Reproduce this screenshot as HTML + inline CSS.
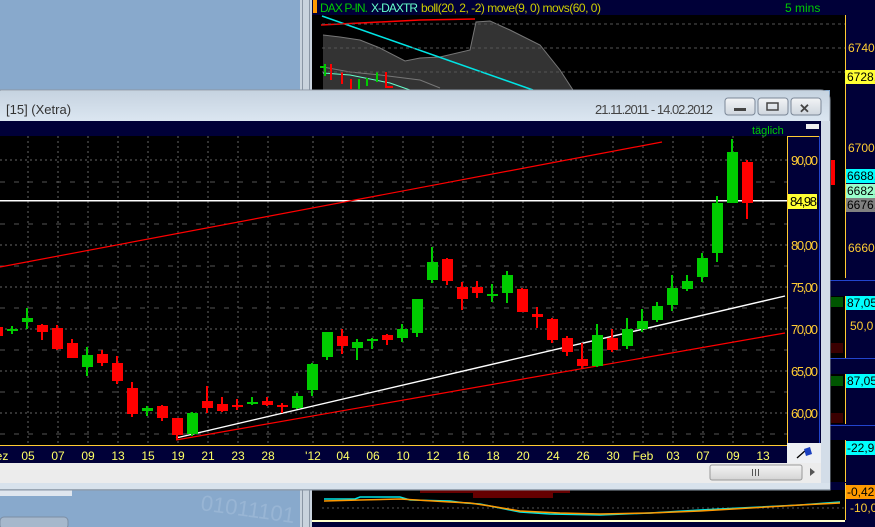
<!DOCTYPE html>
<html><head><meta charset="utf-8"><style>
html,body{margin:0;padding:0;width:875px;height:527px;overflow:hidden;background:#88a9cc}
svg{display:block}
text{font-family:"Liberation Sans",sans-serif}
</style></head><body>
<svg width="875" height="527" viewBox="0 0 875 527" xmlns="http://www.w3.org/2000/svg">
<defs>
<linearGradient id="tb" x1="0" y1="0" x2="0" y2="1"><stop offset="0" stop-color="#c6d3e0"/><stop offset="1" stop-color="#dbe6f1"/></linearGradient>
<linearGradient id="btn" x1="0" y1="0" x2="0" y2="1"><stop offset="0" stop-color="#f2f4f6"/><stop offset="1" stop-color="#cfd6de"/></linearGradient>
<linearGradient id="thumb" x1="0" y1="0" x2="0" y2="1"><stop offset="0" stop-color="#f4f4f4"/><stop offset="1" stop-color="#d4d4d4"/></linearGradient>
</defs>
<rect x="0" y="0" width="875" height="527" fill="#88a9cc"/>
<rect x="300" y="0" width="12" height="527" fill="#c9d3dd"/>
<rect x="302" y="0" width="1" height="527" fill="#8a96a4"/>
<rect x="309" y="0" width="1" height="527" fill="#8a96a4"/>
<!-- top bg chart -->
<rect x="312" y="0" width="563" height="90" fill="#000"/>
<rect x="312" y="0" width="563" height="15" fill="#000038"/>
<rect x="313" y="0" width="4" height="13" fill="#ff9900"/>
<text x="320" y="12" font-size="12" fill="#00cc00" textLength="48">DAX P-IN.</text>
<text x="371" y="12" font-size="12" fill="#66ffcc" textLength="47">X-DAXTR</text>
<text x="421" y="12" font-size="12" fill="#cccc00" textLength="180">boll(20, 2, -2) move(9, 0) movs(60, 0)</text>
<text x="785" y="12" font-size="12" fill="#00cc00">5 mins</text>
<polygon points="323,35 340,37 360,40 380,48 405,61 420,58 440,57 470,50 476,22 490,21 510,30 540,45 560,70 573,90 323,90" fill="#333"/>
<polyline points="323,35 340,37 360,40 380,48 405,61 420,58 440,57 470,50 476,22 490,21 510,30 540,45 560,70 573,90" fill="none" stroke="#777" stroke-width="1"/>
<polyline points="322,16 533,90" stroke="#00e5e5" stroke-width="1.5" fill="none"/>
<polyline points="321,25 360,23 420,20 475,19" stroke="#ff0000" stroke-width="1.5" fill="none"/>
<polyline points="323,67 350,72 380,75 420,80 440,88" stroke="#777" fill="none"/>
<polyline points="323,73 350,75 390,83 410,90" stroke="#66ffcc" fill="none"/>
<g fill="#00cc00"><rect x="324" y="64" width="2" height="12"/><rect x="320" y="66" width="6" height="2"/><rect x="358" y="79" width="2" height="10"/><rect x="366" y="78" width="2" height="8"/><rect x="376" y="72" width="2" height="10"/></g>
<g fill="#ff0000"><rect x="330" y="64" width="2" height="16"/><rect x="341" y="72" width="2" height="12"/><rect x="350" y="79" width="2" height="10"/><rect x="385" y="72" width="2" height="16"/><rect x="385" y="86" width="8" height="2"/></g>
<g stroke="#555" stroke-dasharray="3,3"><line x1="322" y1="48" x2="845" y2="48"/><line x1="322" y1="24" x2="845" y2="24"/><line x1="322" y1="72" x2="845" y2="72"/></g>
<rect x="845" y="15" width="30" height="75" fill="#000038"/>
<rect x="845" y="15" width="1" height="75" fill="#ffcc33"/>
<text x="848" y="52" font-size="12" fill="#ffcc33">6740</text>
<rect x="845" y="70" width="30" height="14" fill="#ffff33"/>
<text x="847" y="81" font-size="12" fill="#000">6728,</text>
<text x="848" y="103" font-size="12" fill="#ffcc33">6720</text>

<rect x="830" y="90" width="45" height="400" fill="#000038"/>
<rect x="830" y="90" width="15" height="190" fill="#000"/>
<rect x="845" y="90" width="1" height="188" fill="#ffcc33"/>
<text x="848" y="152" font-size="12" fill="#ffcc33">6700</text>
<rect x="846" y="169" width="29" height="14" fill="#00ffff"/><text x="847" y="180" font-size="12" fill="#000">6688,</text>
<rect x="846" y="184" width="29" height="14" fill="#99ffcc"/><text x="847" y="195" font-size="12" fill="#000">6682,</text>
<rect x="846" y="198" width="29" height="14" fill="#808080"/><text x="847" y="209" font-size="12" fill="#000">6676,</text>
<text x="848" y="252" font-size="12" fill="#ffcc33">6660</text>
<rect x="831" y="160" width="4" height="25" fill="#ff0000"/>
<rect x="830" y="280" width="45" height="1" fill="#2244cc"/>
<rect x="830" y="296" width="15" height="62" fill="#000"/>
<rect x="845" y="296" width="1" height="62" fill="#ffcc33"/>
<rect x="831" y="297" width="12" height="10" fill="#005500"/>
<rect x="831" y="343" width="12" height="10" fill="#3a0000"/>
<rect x="846" y="296" width="29" height="14" fill="#00ffff"/><text x="847" y="307" font-size="12" fill="#000">87,05</text>
<text x="850" y="330" font-size="12" fill="#ffcc33">50,0</text>
<rect x="830" y="358" width="45" height="1" fill="#2244cc"/>
<rect x="830" y="374" width="15" height="50" fill="#000"/>
<rect x="845" y="374" width="1" height="50" fill="#ffcc33"/>
<rect x="831" y="376" width="12" height="10" fill="#005500"/>
<rect x="831" y="413" width="12" height="10" fill="#3a0000"/>
<rect x="846" y="374" width="29" height="14" fill="#00ffff"/><text x="847" y="385" font-size="12" fill="#000">87,05</text>
<rect x="830" y="425" width="45" height="1" fill="#2244cc"/>
<rect x="830" y="440" width="15" height="42" fill="#000"/>
<rect x="845" y="440" width="1" height="42" fill="#ffcc33"/>
<rect x="846" y="441" width="29" height="14" fill="#00ffff"/><text x="847" y="452" font-size="12" fill="#000">-22,93</text>

<rect x="312" y="490" width="563" height="37" fill="#000"/>
<g stroke="#555" stroke-dasharray="2,3"><line x1="322" y1="508" x2="845" y2="508"/></g>
<g fill="#660000"><rect x="420" y="490" width="150" height="3"/><rect x="473" y="490" width="80" height="8"/></g>
<polyline points="324,499 355,499 360,497 400,497 410,500 450,501 465,503 480,504 500,508 520,512 550,514 600,515 650,513 700,510 740,508 800,505 840,502" fill="none" stroke="#00e5e5" stroke-width="1.5"/>
<polyline points="324,501 360,500 400,499 450,502 470,503 490,506 520,511 560,513 600,514 650,513 700,511 750,508 800,505 840,503" fill="none" stroke="#ff9900" stroke-width="1.5"/>
<rect x="312" y="520" width="563" height="2" fill="#ffffcc"/>
<rect x="312" y="522" width="563" height="5" fill="#000038"/>
<rect x="845" y="490" width="30" height="37" fill="#000038"/>
<rect x="845" y="483" width="1" height="37" fill="#ffcc33"/>
<rect x="846" y="485" width="29" height="14" fill="#ff9900"/><text x="847" y="496" font-size="12" fill="#000">-0,421</text>
<text x="850" y="512" font-size="12" fill="#ffcc33">-10,0</text>
<text x="200" y="510" font-size="22" fill="#98b5d4" transform="rotate(8 200 510)">01011101</text>
<rect x="0" y="490" width="72" height="6" fill="#dfe6ee"/>
<rect x="0" y="517" width="68" height="12" rx="4" fill="#a6b8cc" stroke="#7c8ea4"/>

<!-- MAIN WINDOW -->
<path d="M0,90 H820 Q830,90 830,100 V490 H0 Z" fill="#d8e2ec" stroke="#8b97a5"/>
<rect x="0" y="91" width="829" height="30" fill="url(#tb)"/>
<text x="6" y="114" font-size="13" fill="#333">[15] (Xetra)</text>
<text x="595" y="114" font-size="13" fill="#444" textLength="118">21.11.2011 - 14.02.2012</text>
<g stroke="#7b8797" fill="url(#btn)"><rect x="725" y="98" width="30" height="17" rx="3"/><rect x="758" y="98" width="30" height="17" rx="3"/><rect x="791" y="98" width="30" height="17" rx="3"/></g>
<rect x="734" y="108" width="12" height="3" fill="#444"/>
<rect x="767" y="103" width="11" height="7" fill="none" stroke="#444" stroke-width="1.5"/>
<text x="799" y="113" font-size="13" font-weight="bold" fill="#444">✕</text>
<rect x="0" y="121" width="821" height="325" fill="#000038"/>
<rect x="0" y="136" width="787" height="310" fill="#000"/>
<text x="752" y="134" font-size="11" fill="#00cc00">täglich</text>
<rect x="806" y="124" width="13" height="5" fill="#eee"/>
<g stroke="#666" stroke-dasharray="2,3">
<line x1="0" y1="160" x2="787" y2="160"/><line x1="0" y1="245" x2="787" y2="245"/><line x1="0" y1="287" x2="787" y2="287"/><line x1="0" y1="329" x2="787" y2="329"/><line x1="0" y1="371" x2="787" y2="371"/><line x1="0" y1="413" x2="787" y2="413"/>
<line x1="28" y1="136" x2="28" y2="446"/><line x1="58" y1="136" x2="58" y2="446"/><line x1="88" y1="136" x2="88" y2="446"/><line x1="118" y1="136" x2="118" y2="446"/><line x1="148" y1="136" x2="148" y2="446"/><line x1="178" y1="136" x2="178" y2="446"/><line x1="208" y1="136" x2="208" y2="446"/><line x1="238" y1="136" x2="238" y2="446"/><line x1="268" y1="136" x2="268" y2="446"/><line x1="313" y1="136" x2="313" y2="446"/><line x1="343" y1="136" x2="343" y2="446"/><line x1="373" y1="136" x2="373" y2="446"/><line x1="403" y1="136" x2="403" y2="446"/><line x1="433" y1="136" x2="433" y2="446"/><line x1="463" y1="136" x2="463" y2="446"/><line x1="493" y1="136" x2="493" y2="446"/><line x1="523" y1="136" x2="523" y2="446"/><line x1="553" y1="136" x2="553" y2="446"/><line x1="583" y1="136" x2="583" y2="446"/><line x1="613" y1="136" x2="613" y2="446"/><line x1="643" y1="136" x2="643" y2="446"/><line x1="673" y1="136" x2="673" y2="446"/><line x1="703" y1="136" x2="703" y2="446"/><line x1="733" y1="136" x2="733" y2="446"/><line x1="763" y1="136" x2="763" y2="446"/>
</g>
<g stroke="#555" stroke-dasharray="5,9">
<line x1="0" y1="182" x2="787" y2="182"/><line x1="0" y1="224" x2="787" y2="224"/><line x1="0" y1="266" x2="787" y2="266"/><line x1="0" y1="308" x2="787" y2="308"/><line x1="0" y1="350" x2="787" y2="350"/><line x1="0" y1="392" x2="787" y2="392"/><line x1="0" y1="434" x2="787" y2="434"/>
</g>
<rect x="0" y="200" width="787" height="1.5" fill="#fff"/>
<line x1="0" y1="267" x2="662" y2="142" stroke="#ff0000" stroke-width="1.2"/>
<line x1="176" y1="440" x2="785" y2="333" stroke="#ff0000" stroke-width="1.2"/>
<line x1="176" y1="438" x2="785" y2="296" stroke="#fff" stroke-width="1.4"/>
<g fill="#00cc00">
<rect x="11" y="326" width="2" height="8"/><rect x="7" y="329" width="11" height="2"/>
<rect x="26" y="308" width="2" height="21"/><rect x="22" y="318" width="11" height="4"/>
<rect x="86" y="347" width="2" height="29"/><rect x="82" y="355" width="11" height="12"/>
<rect x="146" y="406" width="2" height="10"/><rect x="142" y="408" width="11" height="3"/>
<rect x="191" y="412" width="2" height="24"/><rect x="187" y="413" width="11" height="21"/>
<rect x="251" y="397" width="2" height="8"/><rect x="247" y="402" width="11" height="2"/>
<rect x="296" y="393" width="2" height="16"/><rect x="292" y="396" width="11" height="12"/>
<rect x="311" y="363" width="2" height="33"/><rect x="307" y="364" width="11" height="26"/>
<rect x="326" y="332" width="2" height="28"/><rect x="322" y="332" width="11" height="25"/>
<rect x="356" y="339" width="2" height="21"/><rect x="352" y="342" width="11" height="6"/>
<rect x="371" y="338" width="2" height="11"/><rect x="367" y="339" width="11" height="2"/>
<rect x="401" y="324" width="2" height="18"/><rect x="397" y="329" width="11" height="9"/>
<rect x="416" y="299" width="2" height="38"/><rect x="412" y="299" width="11" height="34"/>
<rect x="431" y="247" width="2" height="36"/><rect x="427" y="262" width="11" height="18"/>
<rect x="491" y="284" width="2" height="18"/><rect x="487" y="294" width="11" height="2"/>
<rect x="506" y="271" width="2" height="32"/><rect x="502" y="275" width="11" height="18"/>
<rect x="596" y="324" width="2" height="43"/><rect x="592" y="335" width="11" height="31"/>
<rect x="626" y="318" width="2" height="31"/><rect x="622" y="329" width="11" height="17"/>
<rect x="641" y="309" width="2" height="23"/><rect x="637" y="321" width="11" height="8"/>
<rect x="656" y="302" width="2" height="20"/><rect x="652" y="306" width="11" height="14"/>
<rect x="671" y="275" width="2" height="36"/><rect x="667" y="288" width="11" height="17"/>
<rect x="686" y="275" width="2" height="16"/><rect x="682" y="281" width="11" height="8"/>
<rect x="701" y="253" width="2" height="29"/><rect x="697" y="258" width="11" height="19"/>
<rect x="716" y="196" width="2" height="66"/><rect x="712" y="203" width="11" height="50"/>
<rect x="731" y="139" width="2" height="64"/><rect x="727" y="152" width="11" height="51"/>
</g>
<g fill="#ff0000">
<rect x="0" y="327" width="3" height="9"/>
<rect x="41" y="324" width="2" height="16"/><rect x="37" y="325" width="11" height="7"/>
<rect x="56" y="325" width="2" height="25"/><rect x="52" y="328" width="11" height="21"/>
<rect x="71" y="339" width="2" height="19"/><rect x="67" y="343" width="11" height="15"/>
<rect x="101" y="350" width="2" height="16"/><rect x="97" y="354" width="11" height="9"/>
<rect x="116" y="356" width="2" height="28"/><rect x="112" y="363" width="11" height="18"/>
<rect x="131" y="382" width="2" height="35"/><rect x="127" y="388" width="11" height="26"/>
<rect x="161" y="405" width="2" height="16"/><rect x="157" y="406" width="11" height="12"/>
<rect x="176" y="418" width="2" height="22"/><rect x="172" y="418" width="11" height="17"/>
<rect x="206" y="386" width="2" height="27"/><rect x="202" y="401" width="11" height="7"/>
<rect x="221" y="397" width="2" height="15"/><rect x="217" y="404" width="11" height="7"/>
<rect x="236" y="399" width="2" height="11"/><rect x="232" y="405" width="11" height="2"/>
<rect x="266" y="397" width="2" height="9"/><rect x="262" y="401" width="11" height="4"/>
<rect x="281" y="403" width="2" height="10"/><rect x="277" y="405" width="11" height="2"/>
<rect x="341" y="329" width="2" height="25"/><rect x="337" y="336" width="11" height="10"/>
<rect x="386" y="334" width="2" height="11"/><rect x="382" y="335" width="11" height="5"/>
<rect x="446" y="258" width="2" height="27"/><rect x="442" y="259" width="11" height="22"/>
<rect x="461" y="282" width="2" height="28"/><rect x="457" y="287" width="11" height="12"/>
<rect x="476" y="281" width="2" height="17"/><rect x="472" y="287" width="11" height="6"/>
<rect x="521" y="288" width="2" height="24"/><rect x="517" y="289" width="11" height="23"/>
<rect x="536" y="307" width="2" height="21"/><rect x="532" y="314" width="11" height="3"/>
<rect x="551" y="318" width="2" height="25"/><rect x="547" y="319" width="11" height="21"/>
<rect x="566" y="336" width="2" height="20"/><rect x="562" y="338" width="11" height="14"/>
<rect x="581" y="343" width="2" height="26"/><rect x="577" y="359" width="11" height="7"/>
<rect x="611" y="329" width="2" height="23"/><rect x="607" y="338" width="11" height="12"/>
<rect x="746" y="160" width="2" height="59"/><rect x="742" y="162" width="11" height="41"/>
</g>
<rect x="787" y="136" width="34" height="310" fill="#000038"/>
<rect x="787" y="136" width="1" height="310" fill="#ffcc33"/>
<rect x="787" y="136" width="32" height="1" fill="#ffcc33"/>
<rect x="819" y="136" width="1" height="310" fill="#2244cc"/>
<g fill="#ffcc33" font-size="13"><text x="791" y="165" textLength="27">90,00</text><text x="791" y="250" textLength="27">80,00</text><text x="791" y="292" textLength="27">75,00</text><text x="791" y="334" textLength="27">70,00</text><text x="791" y="376" textLength="27">65,00</text><text x="791" y="418" textLength="27">60,00</text></g>
<rect x="788" y="194" width="29" height="15" fill="#ffff33"/>
<text x="790" y="206" font-size="13" fill="#000" textLength="27">84,98</text>
<rect x="821" y="121" width="9" height="369" fill="#d3dde8"/>
<rect x="0" y="446" width="787" height="17" fill="#000038"/>
<rect x="0" y="445" width="787" height="1" fill="#ffcc33"/>
<g fill="#ffff66" font-size="12" text-anchor="middle">
<text x="2" y="460">ez</text><text x="28" y="460">05</text><text x="58" y="460">07</text><text x="88" y="460">09</text><text x="118" y="460">13</text><text x="148" y="460">15</text><text x="178" y="460">19</text><text x="208" y="460">21</text><text x="238" y="460">23</text><text x="268" y="460">28</text><text x="313" y="460">'12</text><text x="343" y="460">04</text><text x="373" y="460">06</text><text x="403" y="460">10</text><text x="433" y="460">12</text><text x="463" y="460">16</text><text x="493" y="460">18</text><text x="523" y="460">20</text><text x="553" y="460">24</text><text x="583" y="460">26</text><text x="613" y="460">30</text><text x="643" y="460">Feb</text><text x="673" y="460">03</text><text x="703" y="460">07</text><text x="733" y="460">09</text><text x="763" y="460">13</text>
</g>
<rect x="787" y="443" width="34" height="21" fill="#eef0f3"/>
<line x1="797" y1="458" x2="806" y2="450" stroke="#000" stroke-width="1.3"/>
<polygon points="804,449 810,447 812,454 806,456" fill="#1a3fbf"/>
<rect x="0" y="463" width="821" height="20" fill="#ececec"/>
<rect x="710" y="465" width="92" height="15" rx="2" fill="url(#thumb)" stroke="#999"/>
<g fill="#555"><rect x="752" y="469" width="1" height="7"/><rect x="755" y="469" width="1" height="7"/><rect x="758" y="469" width="1" height="7"/></g>
<polygon points="810,468 815,472 810,476" fill="#555"/>
<rect x="0" y="483" width="830" height="7" fill="#d8e2ec"/>
<rect x="0" y="489" width="830" height="1" fill="#9aa6b3"/>
</svg>
</body></html>
